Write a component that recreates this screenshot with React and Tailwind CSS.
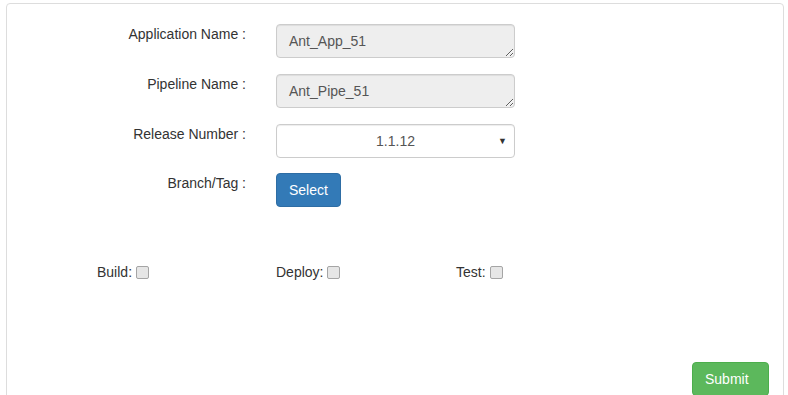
export default function App() {
  const labelCls = "w-[239px] shrink-0 text-right leading-[20px]";
  const fieldCls =
    "ml-[30px] w-[239px] h-[34px] rounded-[4px] border border-[#ccc] px-[12px] py-[6px] text-[14px] leading-[20px] text-[#555] shadow-[inset_0_1px_1px_rgba(0,0,0,0.075)]";
  const boxCls =
    "ml-[4px] w-[13px] h-[13px] appearance-none rounded-[2px] border border-[#a5a5a5] bg-[#e6e6e6]";

  return (
    <div
      className="bg-white min-h-[395px] pt-[3px] pl-[6px] text-[14px] text-[#333]"
      style={{ fontFamily: '"Liberation Sans", Arial, sans-serif' }}
    >
      <div className="w-[778px] rounded-t-[4px] border border-[#ddd] pt-[20px] pb-[20px]">
        <div className="flex flex-col gap-[16px]">
          <div className="flex items-start">
            <label className={labelCls}>Application Name :</label>
            <textarea
              readOnly
              defaultValue="Ant_App_51"
              className={`${fieldCls} bg-[#eee] overflow-hidden block`}
            />
          </div>
          <div className="flex items-start">
            <label className={labelCls}>Pipeline Name :</label>
            <textarea
              readOnly
              defaultValue="Ant_Pipe_51"
              className={`${fieldCls} bg-[#eee] overflow-hidden block`}
            />
          </div>
          <div className="flex items-start">
            <label className={labelCls}>Release Number :</label>
            <div className="relative">
              <select
                defaultValue="1.1.12"
                className={`${fieldCls} bg-white appearance-none text-center [text-align-last:center] block`}
              >
                <option>1.1.12</option>
              </select>
              <span className="pointer-events-none absolute right-[8px] top-[9px] text-[9px] leading-[16px] text-[#333]">
                ▼
              </span>
            </div>
          </div>
        </div>

        <div className="flex items-start mt-[15px]">
          <label className={labelCls}>Branch/Tag :</label>
          <button className="ml-[30px] h-[34px] px-[12px] rounded-[4px] border border-[#2e6da4] bg-[#337ab7] text-white leading-[20px]">
            Select
          </button>
        </div>

        <div className="flex pl-[90px] mt-[55px] leading-[20px]">
          <div className="w-[179px] flex items-center">
            Build:
            <input type="checkbox" className={boxCls} />
          </div>
          <div className="w-[180px] flex items-center">
            Deploy:
            <input type="checkbox" className={boxCls} />
          </div>
          <div className="w-[180px] flex items-center">
            Test:
            <input type="checkbox" className={boxCls} />
          </div>
        </div>

        <div className="flex justify-end pr-[14px] mt-[80px]">
          <button className="w-[77px] h-[34px] pl-[12px] text-left rounded-[4px] border border-[#4cae4c] bg-[#5cb85c] text-white leading-[20px]">
            Submit
          </button>
        </div>
      </div>
    </div>
  );
}
